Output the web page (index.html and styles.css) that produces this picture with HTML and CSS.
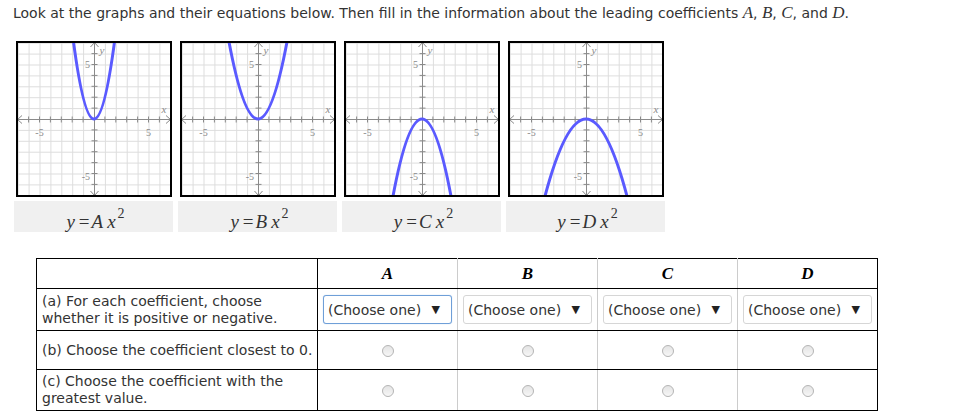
FILE: index.html
```html
<!DOCTYPE html>
<html>
<head>
<meta charset="utf-8">
<link rel="stylesheet" href="styles.css">
</head>
<body>
<svg class="defs" width="0" height="0">
  <defs>
    <pattern id="grid" patternUnits="userSpaceOnUse" x="1.7" y="1.7" width="10.9" height="10.9">
      <path d="M0.5 0V10.9M0 0.5H10.9" stroke="#dddddd" stroke-width="1" fill="none"/>
    </pattern>
    <symbol id="axes" viewBox="0 0 156 156">
      <rect x="0" y="0" width="156" height="156" fill="#fff"/>
      <rect x="0" y="0" width="156" height="156" fill="url(#grid)"/>
      <g stroke="#8a8a8a" stroke-width="1" fill="none">
        <path d="M1 78.5H155M78.5 1V155"/>
        <path d="M6 74.5L1.5 78.5L6 82.5M150 74.5L154.5 78.5L150 82.5M74.5 6L78.5 1.5L82.5 6M74.5 150L78.5 154.5L82.5 150"/>
        <path d="M12.6 75.5v6M23.5 75.5v6M34.4 75.5v6M45.3 75.5v6M56.2 75.5v6M67.1 75.5v6M88.9 75.5v6M99.8 75.5v6M110.7 75.5v6M121.6 75.5v6M132.5 75.5v6M143.4 75.5v6"/>
        <path d="M75.5 12.6h6M75.5 23.5h6M75.5 34.4h6M75.5 45.3h6M75.5 56.2h6M75.5 67.1h6M75.5 88.9h6M75.5 99.8h6M75.5 110.7h6M75.5 121.6h6M75.5 132.5h6M75.5 143.4h6"/>
      </g>
      <g class="lbl">
        <text x="23.5" y="95" text-anchor="middle">-5</text>
        <text x="132.5" y="95" text-anchor="middle">5</text>
        <text x="74" y="27" text-anchor="end">5</text>
        <text x="74" y="139" text-anchor="end">-5</text>
        <text x="148" y="72" text-anchor="middle" class="var">x</text>
        <text x="86" y="13" text-anchor="middle" class="var">y</text>
      </g>
    </symbol>
    <clipPath id="box"><rect x="0" y="0" width="156" height="156"/></clipPath>
  </defs>
</svg>

<div class="page">
  <p class="intro">Look at the graphs and their equations below. Then fill in the information about the leading coefficients <span class="m">A</span>, <span class="m">B</span>, <span class="m">C</span>, and <span class="m">D</span>.</p>

  <div class="graphs">
    <div class="cell">
      <svg class="graph" width="156" height="156" viewBox="0 0 156 156">
        <use href="#axes"/>
        <path clip-path="url(#box)" class="curve" d="M56.2 -9.2Q78 165.2 99.8 -9.2"/>
        <rect class="frame" x="1" y="1" width="154" height="154"/>
      </svg>
      <div class="eq"><span class="eqt">y<span class="eqop">=</span>A<span class="gap"></span>x<sup>2</sup></span></div>
    </div>
    <div class="cell">
      <svg class="graph" width="156" height="156" viewBox="0 0 156 156">
        <use href="#axes"/>
        <path clip-path="url(#box)" class="curve" d="M46.39 -13.67Q78 169.67 109.61 -13.67"/>
        <rect class="frame" x="1" y="1" width="154" height="154"/>
      </svg>
      <div class="eq"><span class="eqt">y<span class="eqop">=</span>B<span class="gap"></span>x<sup>2</sup></span></div>
    </div>
    <div class="cell">
      <svg class="graph" width="156" height="156" viewBox="0 0 156 156">
        <use href="#axes"/>
        <path clip-path="url(#box)" class="curve" d="M46.39 169.67Q78 -13.67 109.61 169.67"/>
        <rect class="frame" x="1" y="1" width="154" height="154"/>
      </svg>
      <div class="eq"><span class="eqt">y<span class="eqop">=</span>C<span class="gap"></span>x<sup>2</sup></span></div>
    </div>
    <div class="cell">
      <svg class="graph" width="156" height="156" viewBox="0 0 156 156">
        <use href="#axes"/>
        <path clip-path="url(#box)" class="curve" d="M34.4 165.2Q78 -9.2 121.6 165.2"/>
        <rect class="frame" x="1" y="1" width="154" height="154"/>
      </svg>
      <div class="eq"><span class="eqt">y<span class="eqop">=</span>D<span class="gap"></span>x<sup>2</sup></span></div>
    </div>
  </div>

  <table class="answers">
    <colgroup>
      <col class="c-label"><col class="c-data"><col class="c-data"><col class="c-data"><col class="c-data">
    </colgroup>
    <tr class="r-head">
      <th class="label"></th>
      <th class="hl">A</th>
      <th class="hl">B</th>
      <th class="hl">C</th>
      <th class="hl last">D</th>
    </tr>
    <tr class="r-a">
      <td class="label">(a) For each coefficient, choose<br>whether it is positive or negative.</td>
      <td><div class="sel focus"><span>(Choose one)</span><span class="arr">&#9660;</span></div></td>
      <td><div class="sel"><span>(Choose one)</span><span class="arr">&#9660;</span></div></td>
      <td><div class="sel"><span>(Choose one)</span><span class="arr">&#9660;</span></div></td>
      <td class="last"><div class="sel"><span>(Choose one)</span><span class="arr">&#9660;</span></div></td>
    </tr>
    <tr class="r-b">
      <td class="label">(b) Choose the coefficient closest to 0.</td>
      <td><span class="radio"></span></td>
      <td><span class="radio"></span></td>
      <td><span class="radio"></span></td>
      <td class="last"><span class="radio"></span></td>
    </tr>
    <tr class="r-c">
      <td class="label">(c) Choose the coefficient with the<br>greatest value.</td>
      <td><span class="radio"></span></td>
      <td><span class="radio"></span></td>
      <td><span class="radio"></span></td>
      <td class="last"><span class="radio"></span></td>
    </tr>
  </table>
</div>
</body>
</html>
```

FILE: styles.css
```css
html, body {
  background: #ffffff;
}
body {
  margin: 0;
  font-family: "DejaVu Sans", Verdana, sans-serif;
  font-size: 14px;
  color: #333333;
}
.defs {
  position: absolute;
  width: 0;
  height: 0;
}
.page {
  padding: 5px 0 0 13px;
}
.intro {
  margin: 0;
  line-height: 16px;
  height: 16px;
}
.m {
  font-family: "Liberation Serif", "Times New Roman", serif;
  font-style: italic;
  font-size: 17px;
}
.graphs {
  display: grid;
  grid-template-columns: repeat(4, 159px);
  column-gap: 5px;
  margin: 20px 0 0 1px;
}
.cell {
  display: flex;
  flex-direction: column;
  align-items: center;
}
.graph {
  display: block;
  width: 156px;
  height: 156px;
}
.lbl text {
  font-family: "Liberation Serif", serif;
  font-size: 10px;
  fill: #8a8a8a;
}
.lbl text.var {
  font-style: italic;
  font-size: 11px;
}
.curve {
  fill: none;
  stroke: #5a5aff;
  stroke-width: 3;
}
.frame {
  fill: none;
  stroke: #000;
  stroke-width: 2;
}
.eq {
  align-self: stretch;
  margin-top: 4px;
  height: 31px;
  background: #f0f0f0;
  display: flex;
  align-items: flex-end;
  justify-content: center;
  padding: 0 0 1px 4px;
  box-sizing: border-box;
}
.eqt {
  display: block;
  font-family: "Liberation Serif", "Times New Roman", serif;
  font-style: italic;
  font-size: 19px;
  line-height: 19px;
  color: #333;
  white-space: nowrap;
}
.eqop {
  font-style: normal;
  margin: 0 2px 0 4px;
}
.gap {
  display: inline-block;
  width: 4px;
}
.eq sup {
  font-style: normal;
  font-size: 14px;
  line-height: 0;
  vertical-align: baseline;
  position: relative;
  top: -10px;
  margin-left: 2px;
}
.answers {
  margin: 26px 0 0 23px;
  border-collapse: collapse;
  border: 1px solid #000;
  table-layout: fixed;
  width: 841px;
}
.c-label { width: 281px; }
.c-data { width: 140px; }
.answers th, .answers td {
  border-top: 1px solid #000;
  border-bottom: 1px solid #000;
  border-right: 1px solid #cccccc;
  padding: 0;
  text-align: center;
  vertical-align: middle;
}
.answers .label {
  border-right: 1px solid #000;
  text-align: left;
  padding-left: 5px;
  line-height: 17px;
}
.answers .last {
  border-right: 1px solid #000;
}
.hl {
  font-family: "Liberation Serif", "Times New Roman", serif;
  font-style: italic;
  font-weight: bold;
  font-size: 17px;
  color: #000;
}
.r-head { height: 30px; }
.r-a { height: 42px; }
.r-b { height: 39px; }
.r-c { height: 41px; }
.sel {
  box-sizing: border-box;
  width: 129px;
  height: 29px;
  margin: 0 auto;
  border: 1px solid #d6d6d6;
  border-radius: 3px;
  display: flex;
  align-items: center;
  justify-content: space-between;
  padding: 0 11px 0 4px;
  color: #333;
  background: #fff;
}
.sel.focus {
  border-color: #6f9fd8;
  box-shadow: 0 0 1px #9cc0ea;
}
.arr {
  font-size: 11px;
  color: #222;
}
.radio {
  display: inline-block;
  width: 12px;
  height: 12px;
  border-radius: 50%;
  box-sizing: border-box;
  border: 1px solid #b5b5b5;
  background: linear-gradient(#e4e4e4, #f6f6f6);
  vertical-align: middle;
}
```
